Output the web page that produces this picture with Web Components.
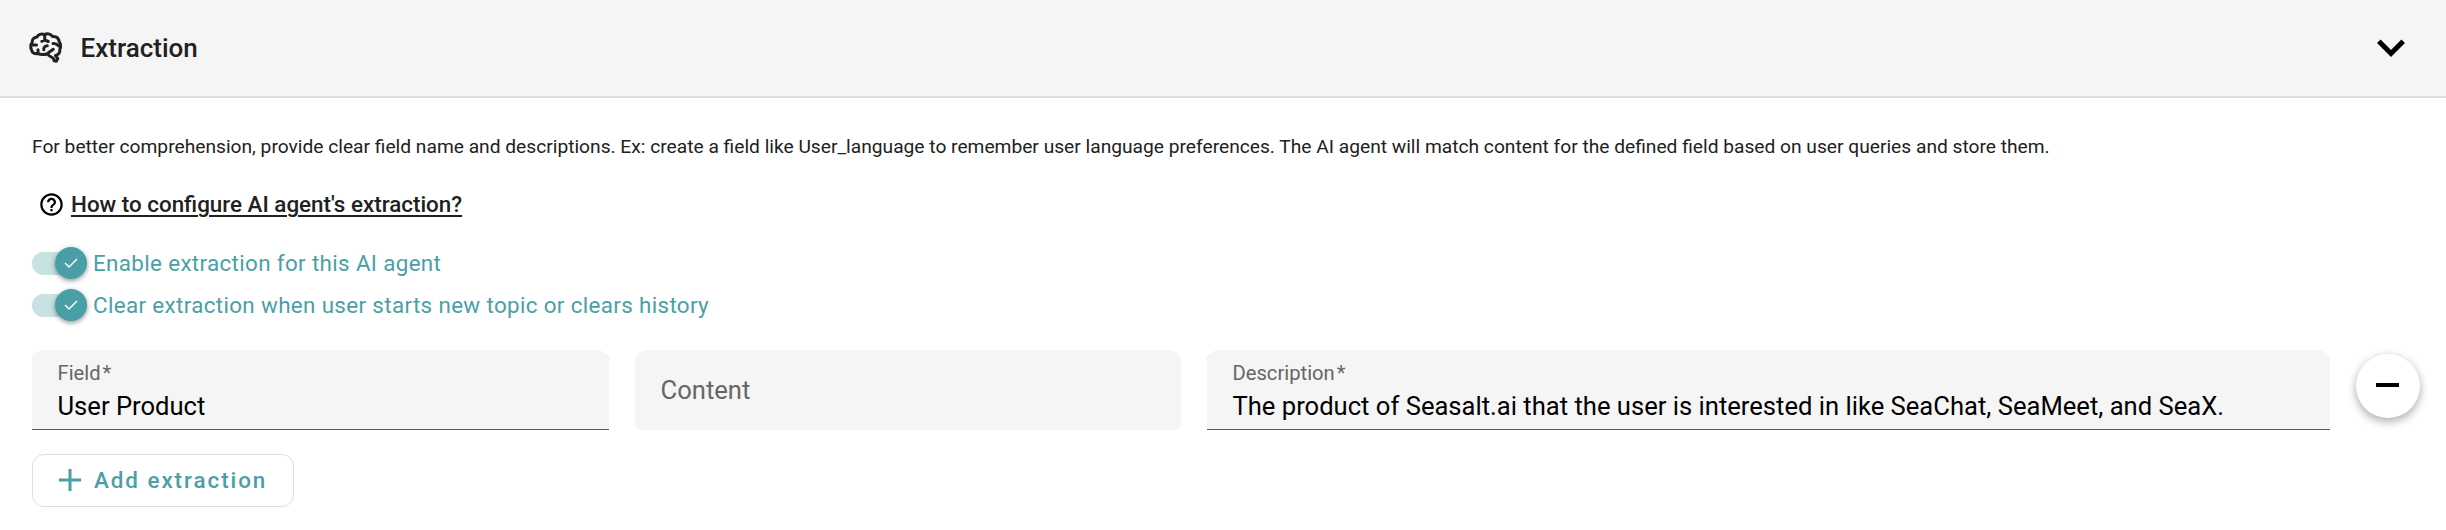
<!DOCTYPE html>
<html lang="en"><head><meta charset="utf-8"><title>Extraction</title>
<style>
body{margin:0;background:#fff;font-family:Roboto,"Liberation Sans",sans-serif;color:#212121}
</style></head><body>
<extraction-panel></extraction-panel>
<script>
const define=(name,html)=>customElements.define(name,class extends HTMLElement{
  constructor(){super();this.attachShadow({mode:'open'}).innerHTML=html;}
});
define('panel-header',`<style>
:host{display:flex;align-items:center;box-sizing:border-box;height:98px;padding:0 37px 0 28px;background:#f5f5f5;border-bottom:2px solid #dedede}
.brain{width:36px;height:36px;margin-right:16.500px}
h2{margin:0;font-size:26px;font-weight:500;line-height:32px;flex:1}
.chev{width:36px;height:36px}
svg{display:block}
</style>
<svg class="brain" viewBox="0 0 36 36" fill="none" stroke="#212121" stroke-width="3" stroke-linecap="round" stroke-linejoin="round">
<path d="M16.500 4.600C13.500 3.300 10 4.600 9 7 5.500 7.200 3.800 10 4.200 12.600 2.500 14.500 2.300 18 3.600 20 4 23 7 24.300 10 23.600 13 25 17 24.500 19.500 24 21 26.500 24 27 25.500 28.500L26 30.800 28.300 31.200 29.800 28.500 27.500 25.500C30.500 25 32.300 22.500 31.800 19.500 33 16.500 32.600 13.500 31.200 11.600 30.500 8 28 6 24.500 6.500 22.500 3.600 19 3.200 16.500 4.600Z"/>
<path d="M3.500 15H8.500M16.700 5V10M13.800 11.300L16.700 10 20.300 11.500M25 13.500C27 13.300 29.500 14.500 30.800 16M15.800 19.800C15.300 17.500 17 15.800 19.300 15.800M10 23V19.800M20 23L25.300 19.300"/></svg>
<h2><slot></slot></h2>
<svg class="chev" viewBox="0 0 36 36" fill="none" stroke="#000" stroke-width="5"><path d="M5.800 11.200L18 23.400 30.200 11.200"/></svg>`);
define('help-link',`<style>
:host{display:flex;align-items:center;height:30px;margin-left:5.500px}
svg{width:27px;height:27px;margin-right:6.500px}
a{font-size:22.4px;font-weight:500;line-height:30px;color:#212121;text-decoration:underline;text-decoration-thickness:2px;text-underline-offset:3px}
</style><svg viewBox="0 0 24 24"><path d="M11 18h2v-2h-2v2zm1-16C6.480 2 2 6.480 2 12s4.480 10 10 10 10-4.480 10-10S17.520 2 12 2zm0 18c-4.410 0-8-3.590-8-8s3.590-8 8-8 8 3.590 8 8-3.590 8-8 8zm0-14c-2.210 0-4 1.790-4 4h2c0-1.100.9-2 2-2s2 .9 2 2c0 2-3 1.750-3 5h2c0-2.250 3-2.500 3-5 0-2.210-1.790-4-4-4z"/></svg><a><slot></slot></a>`);
define('toggle-row',`<style>
:host{display:flex;align-items:center;height:42px;color:#4a9fa6;font-size:22.4px;letter-spacing:.35px;line-height:30px}
.track{display:flex;justify-content:flex-end;align-items:center;width:54.500px;height:23px;border-radius:12px;background:#c8e2e4;margin-right:6.500px}
.thumb{flex:none;display:grid;place-items:center;width:32px;height:32px;border-radius:50%;background:#4a9fa6;box-shadow:0 2px 4px rgba(0,0,0,.3),0 1px 6px rgba(0,0,0,.14)}
svg{width:14px;height:12px}
</style><div class="track"><div class="thumb"><svg viewBox="0 0 14 12" fill="none" stroke="#fff" stroke-width="1.500"><path d="M1 6L5 10 13 2"/></svg></div></div><span><slot></slot></span>`);
define('text-field',`<style>
:host{display:flex;flex-direction:column;justify-content:center;box-sizing:border-box;height:80px;padding:0 25.500px;background:#f5f5f5;border-radius:12px 12px 6px 6px;font-size:25.600px;line-height:32px;color:#666}
:host([filled]){color:#000;justify-content:flex-start;padding-top:10px;background:#f5f5f5;border-radius:12px 12px 0 0;box-shadow:inset 0 -1px #5c5c5c}
label{display:none;font-size:20.200px;line-height:26px;color:#666;margin-bottom:4px}
:host([filled]) label{display:block}
::slotted(i){font-style:normal;margin-left:2px}
</style><label><slot name="label"></slot></label><div><slot></slot></div>`);
define('add-button',`<style>
:host{display:flex;align-items:center;box-sizing:border-box;width:262px;height:53px;padding:0 0 1px 25px;border:1px solid #dedede;border-radius:12px;color:#4a9fa6;font-size:22.400px;font-weight:500;letter-spacing:1.950px}
svg{width:24px;height:24px;margin-right:12px}
</style><svg viewBox="0 0 24 24" stroke="#4a9fa6" stroke-width="3"><path d="M1 12H23M12 1V23"/></svg><slot></slot>`);
define('remove-button',`<style>
:host{display:grid;place-items:center;width:64px;height:64px;border-radius:50%;background:#fff;box-shadow:0 5px 8px rgba(0,0,0,.2),0 1px 10px rgba(0,0,0,.16)}
div{width:23px;height:4px;background:#000;margin:0 1px 2px 0}
</style><div></div>`);
define('extraction-panel',`<style>
:host{display:block}
main{padding:33px 26px 0 32px}
p{margin:0 0 26px;font-size:19.200px;line-height:32px}
help-link{margin-bottom:23px}
remove-button{margin-bottom:8px}
.fields{display:grid;grid-template-columns:577px 546px 1123px 64px;column-gap:26px;align-items:center;margin:24px 0}
</style><panel-header>Extraction</panel-header><main>
<p><span>For better comprehension, provide clear field name and descriptions. Ex: create a field like User_language to remember user language preferences. The AI agent will match content for the defined field based on user queries and store them.</span></p>
<help-link>How to configure AI agent's extraction?</help-link>
<toggle-row>Enable extraction for this AI agent</toggle-row>
<toggle-row>Clear extraction when user starts new topic or clears history</toggle-row>
<div class="fields"><text-field filled><span slot="label">Field</span><i slot="label">*</i>User Product</text-field><text-field>Content</text-field><text-field filled><span slot="label">Description</span><i slot="label">*</i>The product of Seasalt.ai that the user is interested in like SeaChat, SeaMeet, and SeaX.</text-field><remove-button></remove-button></div>
<add-button>Add extraction</add-button></main>`);
</script></body></html>
